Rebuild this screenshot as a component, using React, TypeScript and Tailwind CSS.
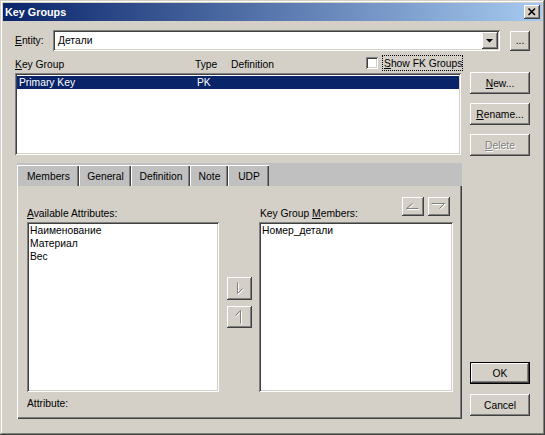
const raised =
  "bg-[#d4d0c8] shadow-[inset_-1px_-1px_#404040,inset_1px_1px_#ffffff,inset_-2px_-2px_#808080,inset_2px_2px_#d4d0c8]";
const sunken =
  "bg-white shadow-[inset_1px_1px_#808080,inset_-1px_-1px_#ffffff,inset_2px_2px_#404040,inset_-2px_-2px_#d4d0c8]";

function Btn({
  children,
  className = "",
  disabled = false,
}: {
  children: React.ReactNode;
  className?: string;
  disabled?: boolean;
}) {
  return (
    <div
      className={`${raised} flex items-center justify-center ${
        disabled ? "text-[#808080] [text-shadow:1px_1px_0_#ffffff]" : ""
      } ${className}`}
    >
      {children}
    </div>
  );
}

function Etched({ d, w, h }: { d: string; w: number; h: number }) {
  return (
    <svg width={w} height={h} viewBox={`0 0 ${w} ${h}`} fill="none">
      <path d={d} stroke="#ffffff" strokeWidth="1" transform="translate(1 1)" />
      <path d={d} stroke="#808080" strokeWidth="1" />
    </svg>
  );
}

function Tab({ label, w }: { label: string; w: string }) {
  return (
    <div
      className={`${w} h-[21px] flex items-center justify-center border-t border-l border-white shadow-[inset_-1px_0_#404040,inset_-2px_0_#808080]`}
    >
      {label}
    </div>
  );
}

export default function App() {
  return (
    <div className="w-[545px] h-[435px] bg-[#d4d0c8] p-[3px] shadow-[inset_-1px_-1px_#404040,inset_1px_1px_#d4d0c8,inset_-2px_-2px_#808080,inset_2px_2px_#ffffff] font-['Liberation_Sans',Arial,sans-serif] text-[10.3px] leading-[13px] text-black select-none">
      {/* title bar */}
      <div className="h-[18px] flex items-center justify-between pl-[2px] pr-[2px] bg-[linear-gradient(to_right,#0a246a,#a6caf0)]">
        <span className="font-bold text-white text-[10.8px]">Key Groups</span>
        <div className={`${raised} w-[16px] h-[14px] flex items-center justify-center`}>
          <svg width="16" height="14" viewBox="0 0 16 14">
            <path d="M4.5 3.5 L11 10 M11 3.5 L4.5 10" stroke="#000" strokeWidth="1.6" />
          </svg>
        </div>
      </div>

      <div className="pl-[12px]">
        {/* entity row */}
        <div className="mt-[9px] h-[21px] flex items-center">
          <span className="w-[38px]">
            <u>E</u>ntity:
          </span>
          <div className={`${sunken} relative w-[447px] h-[21px] flex items-center pl-[5px]`}>
            Детали
            <div className={`${raised} absolute right-[2px] top-[2px] w-[16px] h-[17px] flex items-center justify-center`}>
              <svg width="16" height="17" viewBox="0 0 16 17">
                <polygon points="4,7 11,7 7.5,10.5" fill="#000" />
              </svg>
            </div>
          </div>
          <Btn className="ml-[10px] w-[20px] h-[20px] items-end pb-[4px]">...</Btn>
        </div>

        {/* main row */}
        <div className="mt-[4px] flex">
          <div className="w-[448px]">
            <div className="h-[18px] flex items-center">
              <span className="w-[180px]">
                <u>K</u>ey Group
              </span>
              <span className="w-[36px]">Type</span>
              <span className="w-[135px]">Definition</span>
              <div className={`${sunken} self-start mt-[2px] w-[12px] h-[12px]`} />
              <div className="self-start ml-[4px] w-[81px] h-[16px] border border-dotted border-black flex items-center pl-[1px] whitespace-nowrap">
                <span>
                  <u>S</u>how FK Groups
                </span>
              </div>
            </div>
            <div className={`${sunken} w-[446px] h-[82px] p-[2px]`}>
              <div className="mt-[1px] h-[13px] bg-[#0a246a] text-white flex items-center pl-[2px]">
                <span className="w-[178px]">Primary Key</span>
                <span>PK</span>
              </div>
            </div>

            {/* tab control */}
            <div className="mt-[8px] ml-[2px] w-[445px]">
              <div className="h-[23px] bg-[#c0c0c0] flex items-end">
                <Tab label="Members" w="w-[62px]" />
                <Tab label="General" w="w-[52px]" />
                <Tab label="Definition" w="w-[59px]" />
                <Tab label="Note" w="w-[38px]" />
                <Tab label="UDP" w="w-[41px]" />
              </div>
              <div className="h-[233px] pl-[10px] shadow-[inset_1px_0_#ffffff,inset_-1px_-1px_#404040,inset_-2px_-2px_#808080]">
                <div className="flex">
                  <div className="w-[192px]">
                    <div className="h-[36px] flex items-end pb-[2px]">
                      <span>
                        <u>A</u>vailable Attributes:
                      </span>
                    </div>
                    <div className={`${sunken} h-[170px] p-[2px] px-[3px]`}>
                      <div>Наименование</div>
                      <div>Материал</div>
                      <div>Вес</div>
                    </div>
                    <div className="mt-[5px]">Attribute:</div>
                  </div>

                  <div className="ml-[8px] w-[25px] pt-[91px] flex flex-col gap-[6px]">
                    <Btn className="w-[25px] h-[23px]">
                      <Etched w={25} h={23} d="M10.5 5.5 L10.5 16.5 L15.5 11.5" />
                    </Btn>
                    <Btn className="w-[25px] h-[22px]">
                      <Etched w={25} h={22} d="M8.5 9.5 L13.5 4.5 L13.5 17.5" />
                    </Btn>
                  </div>

                  <div className="ml-[7px] w-[194px]">
                    <div className="h-[36px] flex justify-between">
                      <span className="self-end pb-[2px] pl-[1px]">
                        Key Group <u>M</u>embers:
                      </span>
                      <div className="mt-[11px] mr-[3px] flex gap-[4px]">
                        <Btn className="w-[22px] h-[19px]">
                          <Etched w={22} h={19} d="M10.5 6.5 L4.5 11.5 L16.5 11.5" />
                        </Btn>
                        <Btn className="w-[22px] h-[19px]">
                          <Etched w={22} h={19} d="M3.5 6.5 L16.5 6.5 L11.5 11.5" />
                        </Btn>
                      </div>
                    </div>
                    <div className={`${sunken} h-[170px] p-[2px] px-[3px]`}>
                      <div>Номер_детали</div>
                    </div>
                  </div>
                </div>
              </div>
            </div>
          </div>

          {/* right buttons */}
          <div className="ml-[7px] w-[60px] flex flex-col pt-[17px]">
            <Btn className="h-[22px]">
              <span>
                <u>N</u>ew...
              </span>
            </Btn>
            <Btn className="mt-[9px] h-[22px]">
              <span>
                <u>R</u>ename...
              </span>
            </Btn>
            <Btn className="mt-[9px] h-[22px]" disabled>
              <span>
                <u>D</u>elete
              </span>
            </Btn>
            <div className="mt-[206px] h-[22px] border border-black">
              <Btn className="h-[20px]">OK</Btn>
            </div>
            <Btn className="mt-[10px] h-[22px]">Cancel</Btn>
          </div>
        </div>
      </div>
    </div>
  );
}
